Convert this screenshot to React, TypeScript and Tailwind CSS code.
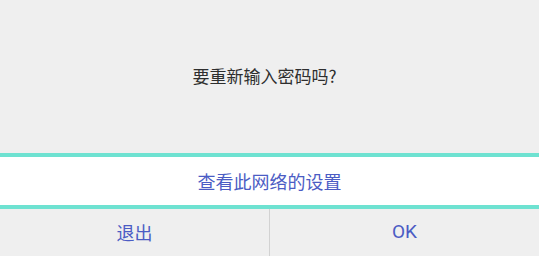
export default function App() {
  return (
    <div
      className="flex h-[256px] w-[539px] flex-col bg-[#efefef]"
      style={{ fontFamily: '"Noto Sans CJK SC", "Noto Sans", sans-serif' }}
    >
      <div className="flex h-[153px] items-center justify-center pb-[1px] pr-[10px]">
        <p className="text-[17px] text-[#2e2e2e]">要重新输入密码吗?</p>
      </div>
      <button className="flex h-[56px] items-center justify-center border-y-[4px] border-[#6ee2d1] bg-white text-[18px] text-[#4b5cc4]">
        查看此网络的设置
      </button>
      <div className="flex flex-1">
        <button className="flex flex-1 items-center justify-center text-[18px] text-[#4b5cc4]">
          退出
        </button>
        <div className="w-px bg-[#d2d2d2]" />
        <button
          className="flex flex-1 items-center justify-center text-[19px] text-[#4b5cc4]"
          style={{ fontFamily: 'Roboto, "Noto Sans", sans-serif' }}
        >
          OK
        </button>
      </div>
    </div>
  );
}
